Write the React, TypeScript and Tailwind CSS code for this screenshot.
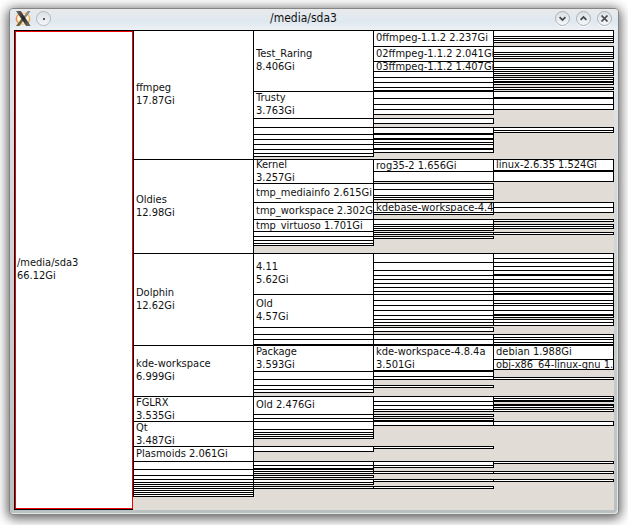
import React from "react";

type Run = number[];
type Labels = Record<number, string[]>;

const TOP = 30;
const LINE = 13;

// Each run lists the y positions of consecutive divider lines.
const columns: { runs: Run[]; labels: Labels }[] = [
  {
    runs: [[30, 159, 253, 345, 396, 421, 446, 461, 469, 475, 479, 482, 484, 486, 488, 490, 492, 494, 496]],
    labels: {
      30: ["ffmpeg", "17.87Gi"],
      159: ["Oldies", "12.98Gi"],
      253: ["Dolphin", "12.62Gi"],
      345: ["kde-workspace", "6.999Gi"],
      396: ["FGLRX", "3.535Gi"],
      421: ["Qt", "3.487Gi"],
      446: ["Plasmoids 2.061Gi"],
    },
  },
  {
    runs: [
      [30, 91, 118, 127, 134, 139, 144, 149, 153, 156],
      [159, 183, 202, 219, 231, 236, 240, 243, 245],
      [253, 294, 327, 334, 339, 344, 345, 371, 379, 385, 389, 392],
      [396, 414, 418, 421, 429, 432, 434, 436, 438],
      [446, 451],
      [461, 465, 468, 469, 471, 473],
      [475, 477],
      [479, 482, 484],
      [486, 488],
    ],
    labels: {
      30: ["Test_Raring", "8.406Gi"],
      91: ["Trusty", "3.763Gi"],
      159: ["Kernel", "3.257Gi"],
      183: ["tmp_mediainfo 2.615Gi"],
      202: ["tmp_workspace 2.302Gi"],
      219: ["tmp_virtuoso 1.701Gi"],
      253: ["4.11", "5.62Gi"],
      294: ["Old", "4.57Gi"],
      345: ["Package", "3.593Gi"],
      396: ["Old 2.476Gi"],
    },
  },
  {
    runs: [
      [30, 46, 61, 71, 77, 82, 87, 90, 91, 98, 104, 109, 114],
      [118, 123],
      [127, 133, 134, 138, 139, 142, 144, 148, 149, 152],
      [159, 171, 181],
      [183, 189, 195, 197, 199],
      [202, 212, 214],
      [219, 224, 226, 228, 230],
      [232, 234],
      [236, 238],
      [253, 262, 270, 275, 279, 283, 287, 291, 294, 300, 305, 310, 315, 319, 322, 325],
      [327, 331],
      [334, 339, 344, 345, 370, 371, 376, 379],
      [385, 387],
      [396, 401, 405, 409, 411],
      [414, 416],
      [418, 420, 421, 425],
      [446, 448],
      [461, 465, 467],
      [471, 473],
      [479, 481],
      [486, 488],
    ],
    labels: {
      30: ["0ffmpeg-1.1.2 2.237Gi"],
      46: ["02ffmpeg-1.1.2 2.041Gi"],
      61: ["03ffmpeg-1.1.2 1.407Gi"],
      159: ["rog35-2 1.656Gi"],
      202: ["kdebase-workspace-4.4.5"],
      345: ["kde-workspace-4.8.4a", "3.501Gi"],
    },
  },
  {
    runs: [
      [30, 36, 38, 40, 42],
      [46, 52, 54, 56, 58],
      [61, 67, 69, 71, 73, 75],
      [77, 79, 81, 82, 84],
      [87, 89],
      [91, 97, 98, 104, 109],
      [127, 130, 132],
      [159, 170, 171, 181],
      [202, 207, 212],
      [219, 221],
      [224, 226, 228],
      [232, 234],
      [253, 258, 262, 266, 270, 274, 275, 279, 283, 287, 291, 293, 294, 300, 303, 305, 310, 314, 315, 317],
      [319, 322, 325],
      [334, 337, 339, 342, 344, 345, 359, 369],
      [377, 379],
      [396, 398, 400, 401],
      [404, 405, 407],
      [409, 411],
      [421, 425],
      [461, 463],
      [471, 473],
      [479, 481],
    ],
    labels: {
      159: ["linux-2.6.35 1.524Gi"],
      345: ["debian 1.988Gi"],
      359: ["obj-x86_64-linux-gnu 1.5Gi"],
    },
  },
];

// Whole-pixel vertical offset that centres a label, leaning upwards.
function labelOffset(inner: number, count: number) {
  const half = (inner - count * LINE) / 2;
  return half >= 0 ? Math.ceil(half) - 1 : Math.floor(half);
}

function Label({ lines, inner }: { lines: string[]; inner: number }) {
  return (
    <div className="shrink-0 whitespace-nowrap" style={{ marginTop: labelOffset(inner, lines.length) }}>
      {lines.map((l) => (
        <div key={l}>{l}</div>
      ))}
    </div>
  );
}

function Column({ runs, labels }: { runs: Run[]; labels: Labels }) {
  let end = TOP;
  return (
    <div className="flex w-[120px] shrink-0 flex-col">
      {runs.map((run) => {
        const gap = run[0] - end;
        end = run[run.length - 1] + 1;
        return (
          <div
            key={run[0]}
            className="relative w-[121px] shrink-0 border-x border-b border-black bg-white"
            style={{ marginTop: gap }}
          >
            {run.slice(0, -1).map((y, i) => (
              <div
                key={y}
                className="flex items-start overflow-hidden border-t border-black pl-[2px]"
                style={{ height: run[i + 1] - y }}
              >
                {labels[y] && <Label lines={labels[y]} inner={run[i + 1] - y - 1} />}
              </div>
            ))}
          </div>
        );
      })}
    </div>
  );
}

function TitleButton({ children }: { children: React.ReactNode }) {
  return (
    <div className="flex size-[15px] items-center justify-center rounded-full border border-[#a9b0b5] bg-linear-to-b from-[#dce1e5] to-[#f5f7f9] shadow-[0_1px_0_#ffffff]">
      <svg width="9" height="9" viewBox="0 0 9 9" fill="none" stroke="#41464a" strokeWidth="1.7">
        {children}
      </svg>
    </div>
  );
}

function XLogo() {
  return (
    <svg width="17" height="17" viewBox="0 0 17 17">
      <defs>
        <linearGradient id="stroke-dark" x1="0" y1="0" x2="1" y2="1">
          <stop offset="0" stopColor="#6b6b6b" />
          <stop offset="0.5" stopColor="#262626" />
          <stop offset="1" stopColor="#77776f" />
        </linearGradient>
        <linearGradient id="ring" x1="0" y1="0" x2="1" y2="0">
          <stop offset="0" stopColor="#f08a3a" />
          <stop offset="0.5" stopColor="#ffd98a" />
          <stop offset="1" stopColor="#f7a848" />
        </linearGradient>
      </defs>
      <ellipse cx="8" cy="8.7" rx="6.7" ry="5.6" fill="#fff6e4" stroke="url(#ring)" strokeWidth="1.5" />
      <path d="M12.6 1h3L10 8.4 8.4 6.8z" fill="#8a8a88" />
      <path d="M6.4 8.8L8.2 11 4.4 16H1z" fill="#6d6238" />
      <path d="M1 1h4.8L15.8 16h-4.6z" fill="url(#stroke-dark)" />
    </svg>
  );
}

export default function App() {
  return (
    <div className="h-[525px] w-[628px] overflow-hidden bg-white pt-[9px] pl-[10px] font-['DejaVu_Sans_Condensed','DejaVu_Sans',sans-serif] text-[11px] leading-[13px] text-[#111] [font-stretch:condensed]">
      <div className="flex h-[505px] w-[608px] flex-col rounded-[4px] bg-linear-to-b from-[#e7edf2] via-[#d4d7d9] via-40% to-[#b9c0c0] shadow-[inset_-1px_-1px_0_#e1e5e5,0_0_0_1px_#858585,0_2px_11px_3px_#666666]">
        <div className="flex h-[21px] shrink-0 items-center rounded-t-[4px] bg-linear-to-b from-[#e9eaec] via-[#dfe8f0] via-60% to-[#edf1f4] pr-[6px] pb-[2px] pl-[5px]">
          <XLogo />
          <div className="ml-[4px] flex size-[15px] items-center justify-center rounded-full border border-[#b3b9be] bg-linear-to-b from-[#dce1e5] to-[#f5f7f9]">
            <div className="size-[2px] bg-[#555b60]" />
          </div>
          <div className="flex-1 pl-px text-center text-[12px]">/media/sda3</div>
          <div className="flex gap-[6px]">
            <TitleButton><path d="M1.6 3.2l2.9 2.9 2.9-2.9" /></TitleButton>
            <TitleButton><path d="M1.6 5.8l2.9-2.9 2.9 2.9" /></TitleButton>
            <TitleButton><path d="M1.5 1.5l6 6M7.5 1.5l-6 6" /></TitleButton>
          </div>
        </div>
        <div className="ml-[4px] flex h-[480px] w-[600px] bg-[#e1ddd6]">
          <div className="w-[119px] shrink-0 border-y border-l border-black">
            <div className="flex h-[478px] items-start border border-[#f00000] bg-white pl-[1px]">
              <Label lines={["/media/sda3", "66.12Gi"]} inner={476} />
            </div>
          </div>
          <div className="flex">
            {columns.map((c, i) => (
              <Column key={i} runs={c.runs} labels={c.labels} />
            ))}
          </div>
        </div>
      </div>
    </div>
  );
}
